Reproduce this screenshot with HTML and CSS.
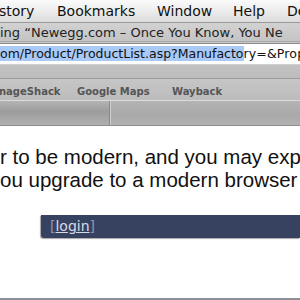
FILE: index.html
```html
<!DOCTYPE html>
<html>
<head>
<meta charset="utf-8">
<link rel="stylesheet" href="styles.css">
</head>
<body>
<div class="window">
  <div class="menubar">
    <span class="menu m-history">story</span>
    <span class="menu m-bookmarks">Bookmarks</span>
    <span class="menu m-window">Window</span>
    <span class="menu m-help">Help</span>
    <span class="menu m-de">De</span>
  </div>
  <div class="titlebar">ing “Newegg.com – Once You Know, You Ne</div>
  <div class="toolbar">
    <div class="address"><span class="sel">om/Product/ProductList.asp?Manufacto</span><span class="tail">ry=&amp;Prop</span></div>
  </div>
  <div class="bookmarks">
    <span class="bm bm-image">nageShack</span>
    <span class="bm bm-google">Google Maps</span>
    <span class="bm bm-way">Wayback</span>
  </div>
  <div class="tabs">
    <div class="tab tab-first"></div>
    <div class="tab tab-rest"></div>
  </div>
  <div class="content">
    <p class="msg">r to be modern, and you may exp</p>
    <p class="msg">ou upgrade to a modern browser</p>
    <div class="loginbar"><span class="br">[</span><a class="login">login</a><span class="br">]</span></div>
  </div>
  <div class="bottom"></div>
</div>
</body>
</html>
```
FILE: styles.css
```css
html, body {
  margin: 0;
  padding: 0;
  width: 300px;
  height: 300px;
  overflow: hidden;
  background: #fff;
}
.window {
  width: 300px;
  height: 300px;
  display: flex;
  flex-direction: column;
  font-family: "DejaVu Sans", "Noto Sans", sans-serif;
}
.menubar {
  height: 22px;
  flex: none;
  display: flex;
  align-items: center;
  background: linear-gradient(#fbfbfb, #ececec 50%, #dcdcdc);
  border-bottom: 1px solid #9a9a9a;
  font-size: 14px;
  color: #111;
  white-space: nowrap;
  overflow: hidden;
}
.menu { flex: none; }
.m-history { margin-left: -1px; width: 58px; }
.m-bookmarks { width: 100px; }
.m-window { width: 76px; }
.m-help { width: 54px; }
.titlebar {
  height: 18px;
  flex: none;
  line-height: 19px;
  background: linear-gradient(#d2d2d2, #c4c4c4);
  font-size: 13px;
  color: #222;
  white-space: nowrap;
  overflow: hidden;
  border-bottom: 1px solid #a8a8a8;
}
.toolbar {
  flex: none;
  height: 37px;
  background: linear-gradient(#c8c8c8, #bdbdbd);
  padding-top: 1px;
  box-sizing: border-box;
  border-bottom: 1px solid #9c9c9c;
}
.address {
  height: 20px;
  line-height: 20px;
  background: #fff;
  font-size: 12.5px;
  color: #111;
  white-space: nowrap;
  overflow: hidden;
  border-top: 1px solid #8a8a8a;
  border-bottom: 1px solid #d0d0d0;
}
.sel { background: #a9c9f6; }
.tail { letter-spacing: 0.15px; }
.bookmarks {
  flex: none;
  height: 22px;
  box-sizing: border-box;
  padding-top: 3px;
  display: flex;
  align-items: center;
  background: linear-gradient(#c6c6c6, #bcbcbc);
  border-bottom: 1px solid #dcdcdc;
  font-size: 10px;
  font-weight: bold;
  color: #555;
  white-space: nowrap;
  overflow: hidden;
}
.bm { flex: none; }
.bm-image { margin-left: -1px; width: 78px; }
.bm-google { width: 95px; }
.tabs {
  flex: none;
  height: 24px;
  display: flex;
  background: linear-gradient(#b4b4b4, #a9a9a9 60%, #b2b2b2);
  border-bottom: 1px solid #8c8c8c;
}
.tab-first {
  width: 109px;
  border-right: 1px solid #8a8a8a;
  background: linear-gradient(#b4b4b4, #9c9c9c 45%, #b0b0b0);
}
.tab-rest { flex: 1; border-left: 1px solid #cfcfcf; }
.content {
  flex: 1;
  padding-top: 20px;
  font-family: "Liberation Sans", Arial, sans-serif;
}
.msg {
  margin: 0;
  font-size: 20.5px;
  line-height: 22.5px;
  color: #111;
  white-space: nowrap;
}
.loginbar {
  margin: 24px 0 0 41px;
  height: 23px;
  background: #364260;
  border-bottom-left-radius: 3px;
  box-shadow: -1px 1px 1px rgba(0,0,0,0.35);
  font-family: "DejaVu Sans", sans-serif;
  font-size: 14px;
  line-height: 23px;
  color: #8e98ad;
  padding-left: 9px;
}
.login { color: #d6dbe6; text-decoration: underline; }
.bottom {
  flex: none;
  height: 2px;
  background: #8e9097;
}
```
